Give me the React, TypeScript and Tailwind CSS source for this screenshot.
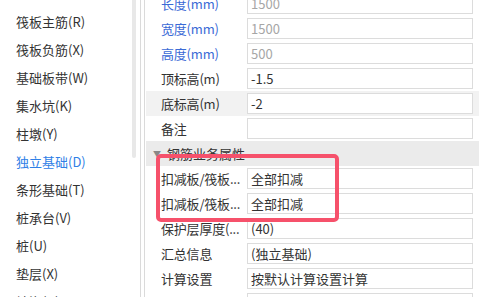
import React from "react";

type Row = {
  label: string;
  value: string;
  blue?: boolean;
  muted?: boolean;
  active?: boolean;
};

const menuItems = [
  "筏板主筋(R)",
  "筏板负筋(X)",
  "基础板带(W)",
  "集水坑(K)",
  "柱墩(Y)",
  "独立基础(D)",
  "条形基础(T)",
  "桩承台(V)",
  "桩(U)",
  "垫层(X)",
  "地沟(G)",
];

const topRows: Row[] = [
  { label: "长度(mm)", value: "1500", blue: true, muted: true },
  { label: "宽度(mm)", value: "1500", blue: true, muted: true },
  { label: "高度(mm)", value: "500", blue: true, muted: true },
  { label: "顶标高(m)", value: "-1.5" },
  { label: "底标高(m)", value: "-2", active: true },
  { label: "备注", value: "" },
];

// labels are cut by the grid the way the app does it ("..." not "…")
const rebarRows: Row[] = [
  { label: "扣减板/筏板...", value: "全部扣减" },
  { label: "扣减板/筏板...", value: "全部扣减" },
  { label: "保护层厚度(...", value: "(40)" },
  { label: "汇总信息", value: "(独立基础)" },
  { label: "计算设置", value: "按默认计算设置计算" },
  { label: "节点设置", value: "" },
];

function PropRow({ row }: { row: Row }) {
  return (
    <div className={`flex h-[25px] shrink-0 items-start ${row.active ? "bg-[#f2f2f2]" : ""}`}>
      <div
        className={`w-[101px] shrink-0 overflow-hidden whitespace-nowrap pl-[15px] leading-[25px] tracking-[-0.2px] ${
          row.blue ? "text-[#3a6ad6]" : "text-[#333]"
        }`}
      >
        {row.label}
      </div>
      <div
        className={`mt-[2px] h-[21px] w-[226px] shrink-0 overflow-hidden whitespace-nowrap border border-[#dcdcdc] bg-white pl-[3px] leading-[19px] ${
          row.muted ? "text-[#a6a6a6]" : "text-[#333]"
        }`}
      >
        {row.value}
      </div>
    </div>
  );
}

export default function App() {
  return (
    <div
      className="relative flex h-[297px] w-[479px] overflow-hidden bg-white text-[13px]"
      style={{ fontFamily: '"Noto Sans CJK SC", "Microsoft YaHei", sans-serif' }}
    >
      {/* left list */}
      <div className="flex w-[132px] shrink-0 flex-col pt-[8px]">
        {menuItems.map((item) => (
          <div
            key={item}
            className={`h-[28px] shrink-0 pl-[16px] leading-[28px] ${
              item === "独立基础(D)" ? "text-[#2f80e6]" : "text-[#333]"
            }`}
          >
            {item}
          </div>
        ))}
      </div>

      {/* scrollbar */}
      <div className="w-[4px] shrink-0">
        <div className="h-[158px] w-full rounded-b-[2px] bg-[#e8e8e8]" />
      </div>

      {/* splitter */}
      <div className="ml-[4px] w-px shrink-0 bg-[#dadada]" />
      <div className="ml-[3px] w-px shrink-0 bg-[#dadada]" />

      {/* property grid */}
      <div className="mt-[-9px] flex min-w-0 flex-1 flex-col pl-px">
        {topRows.map((row, i) => (
          <PropRow key={i} row={row} />
        ))}
        <div className="flex h-[25px] shrink-0 items-center bg-[#ebebeb] text-[#333]">
          <span className="ml-[7px] mr-[6px] text-[8px] text-[#888]">▼</span>
          <span>钢筋业务属性</span>
        </div>
        {rebarRows.map((row, i) => (
          <PropRow key={i} row={row} />
        ))}
      </div>

      {/* highlight box */}
      <div className="pointer-events-none absolute left-[156px] top-[154px] h-[68px] w-[183px] rounded-[5px] border-4 border-[#f6516b]" />
    </div>
  );
}
